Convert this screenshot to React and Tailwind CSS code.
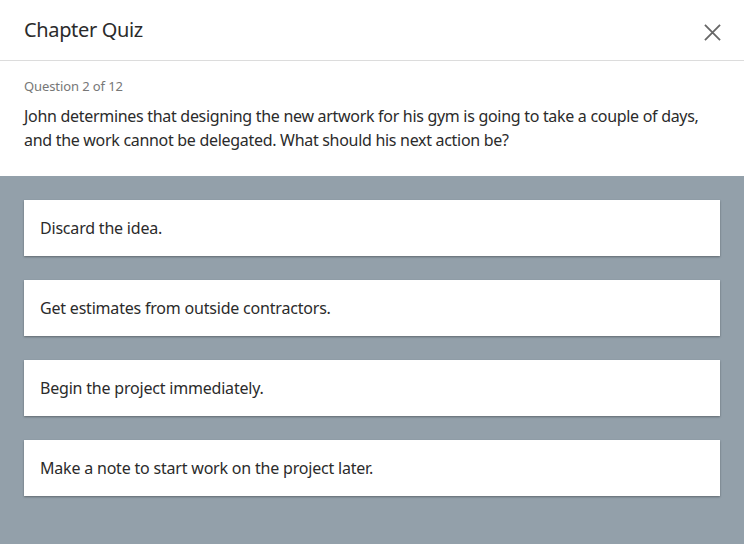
import React from 'react'

const answers = [
  'Discard the idea.',
  'Get estimates from outside contractors.',
  'Begin the project immediately.',
  'Make a note to start work on the project later.',
]

const App = () => {
  return (
    <div className="w-[744px] h-[544px] flex flex-col bg-white text-[#2b2b2b] overflow-hidden font-['Noto_Sans',sans-serif]">
      {/* header */}
      <div className="h-[61px] shrink-0 flex items-center justify-between pl-6 pr-5 border-b border-[#dcdcdc]">
        <h1 className="text-[20px] leading-none pb-px tracking-[-0.35px]">Chapter Quiz</h1>
        <button className="w-6 h-6 mt-1 flex items-center justify-center text-[#666]">
          <svg width="17" height="17" viewBox="0 0 18 18" fill="none" stroke="currentColor" strokeWidth="1.9">
            <path d="M1 1L17 17M17 1L1 17" />
          </svg>
        </button>
      </div>

      {/* question */}
      <div className="px-6 pt-[16px] pb-[24px] shrink-0">
        <div className="text-[13px] leading-[18px] text-[#777] tracking-[-0.1px]">Question 2 of 12</div>
        <p className="mt-[9px] text-[16px] leading-6 tracking-[-0.3px]">
          John determines that designing the new artwork for his gym is going to take a couple of days,
          and the work cannot be delegated. What should his next action be?
        </p>
      </div>

      {/* answers */}
      <div className="flex-1 bg-[#93a0aa] px-6 pt-6 flex flex-col gap-6">
        {answers.map((a) => (
          <button
            key={a}
            className="h-14 shrink-0 bg-white text-left px-4 text-[16px] tracking-[-0.2px] shadow-[0_1px_2px_rgba(0,0,0,0.35)]"
          >
            {a}
          </button>
        ))}
      </div>
    </div>
  )
}

export default App
